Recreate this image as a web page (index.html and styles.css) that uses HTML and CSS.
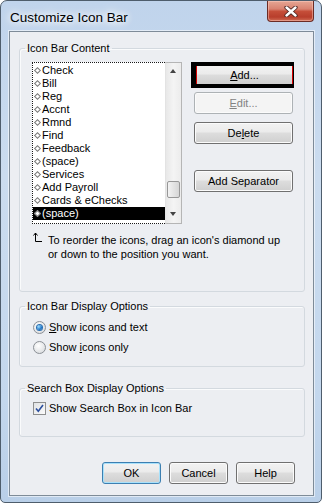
FILE: index.html
```html
<!DOCTYPE html>
<html lang="en">
<head>
    <meta charset="UTF-8">
    <title>Customize Icon Bar</title>
    <link rel="stylesheet" href="styles.css">
</head>
<body>
    <div class="window">
        <div class="titlebar">
            <span class="title">Customize Icon Bar</span>
            <button class="close-btn" aria-label="Close">
                <svg width="14" height="11" viewBox="0 0 14 11">
                    <path d="M2.5 1.5 L11.5 9.5 M11.5 1.5 L2.5 9.5" stroke="#4a2420" stroke-width="4.2" stroke-linecap="round" fill="none"/>
                    <path d="M2.5 1.5 L11.5 9.5 M11.5 1.5 L2.5 9.5" stroke="#ffffff" stroke-width="2.4" stroke-linecap="round" fill="none"/>
                </svg>
            </button>
        </div>

        <div class="client">
            <fieldset class="group group-content">
                <legend>Icon Bar Content</legend>
                <div class="group-body">
                    <div class="content-row">
                        <div class="listbox">
                            <ul class="items" id="itemList"></ul>
                            <div class="scrollbar">
                                <span class="arrow arrow-up"></span>
                                <div class="track">
                                    <span class="thumb"></span>
                                </div>
                                <span class="arrow arrow-down"></span>
                            </div>
                        </div>
                        <div class="side-buttons">
                            <div class="default-frame">
                                <button class="btn btn-add"><u>A</u>dd...</button>
                            </div>
                            <button class="btn btn-side btn-edit" disabled><u>E</u>dit...</button>
                            <button class="btn btn-side btn-delete">De<u>l</u>ete</button>
                            <button class="btn btn-side btn-sep">Add Separator</button>
                        </div>
                    </div>
                    <div class="hint">
                        <svg class="hint-arrow" width="10" height="11" viewBox="0 0 10 11">
                            <path d="M2.5 1 V9.5 H9" stroke="#000" stroke-width="1" fill="none"/>
                            <path d="M0.5 3.5 L2.5 1 L4.5 3.5" stroke="#000" stroke-width="1" fill="none"/>
                        </svg>
                        <p>To reorder the icons, drag an icon's diamond up<br>or down to the position you want.</p>
                    </div>
                </div>
            </fieldset>

            <fieldset class="group group-display">
                <legend>Icon Bar Display Options</legend>
                <div class="group-body">
                    <label class="option">
                        <span class="radio checked"></span>
                        <span><u>S</u>how icons and text</span>
                    </label>
                    <label class="option">
                        <span class="radio"></span>
                        <span>Show <u>i</u>cons only</span>
                    </label>
                </div>
            </fieldset>

            <fieldset class="group group-search">
                <legend>Search Box Display Options</legend>
                <div class="group-body">
                    <label class="option">
                        <span class="checkbox">
                            <svg width="9" height="9" viewBox="0 0 9 9">
                                <path d="M1 4.5 L3.3 7.3 L8 1" stroke="#2c4f9e" stroke-width="1.6" fill="none"/>
                            </svg>
                        </span>
                        <span>Show Search Box in Icon Bar</span>
                    </label>
                </div>
            </fieldset>

            <div class="footer">
                <button class="btn btn-foot btn-ok">OK</button>
                <button class="btn btn-foot">Cancel</button>
                <button class="btn btn-foot">Help</button>
            </div>
        </div>
    </div>

    <script>
        const items = ['Check', 'Bill', 'Reg', 'Accnt', 'Rmnd', 'Find', 'Feedback',
            '(space)', 'Services', 'Add Payroll', 'Cards & eChecks', '(space)'];
        const list = document.getElementById('itemList');
        items.forEach((name, i) => {
            const li = document.createElement('li');
            li.textContent = name;
            if (i === items.length - 1) li.className = 'selected';
            list.appendChild(li);
        });
    </script>
</body>
</html>
```

FILE: styles.css
```css
body {
    margin: 0;
    font-family: "Liberation Sans", Arial, sans-serif;
    font-size: 11px;
    color: #000;
}
.window {
    width: 322px;
    height: 503px;
    box-sizing: border-box;
    border: 1px solid #4e5d6c;
    border-radius: 7px 7px 5px 5px;
    padding: 0 7px 6px 8px;
    background: linear-gradient(#c0d4ec, #cbdcef 35%, #c3d7ed 80%, #b9cfe8);
    display: flex;
    flex-direction: column;
}
.titlebar {
    height: 30px;
    display: flex;
    align-items: flex-start;
    justify-content: space-between;
}
.title {
    margin-top: 9px;
    margin-left: 1px;
    font-size: 13.5px;
    color: #000;
    text-shadow: 0 0 6px #fff, 0 0 10px #fff, 0 0 14px #fff;
}
.close-btn {
    width: 47px;
    height: 21px;
    padding: 0;
    border: 1px solid #6b2b24;
    border-top: none;
    border-radius: 0 0 4px 4px;
    background: linear-gradient(#e6a694, #d98270 40%, #c54e39 52%, #b83e2c 80%, #d06d55);
    box-shadow: inset 0 0 0 1px rgba(255, 210, 200, 0.45);
    display: flex;
    align-items: center;
    justify-content: center;
}
.client {
    flex: 1;
    border: 1px solid #7e8b98;
    box-shadow: 0 0 0 1px rgba(255, 255, 255, 0.55);
    background: #eceef2;
    padding: 9px 8px 0 9px;
    display: flex;
    flex-direction: column;
}
.group {
    margin: 0;
    border: 1px solid #d3d9df;
    border-radius: 3px;
    box-shadow: inset 1px 1px 0 #fafbfc;
    padding: 0;
    min-width: 0;
}
.group legend {
    padding: 0 2px;
    margin-left: 5px;
    line-height: 14px;
}
.group-content .group-body {
    padding: 7px 10px 30px 12px;
}
.content-row {
    display: flex;
    gap: 9px;
}
.listbox {
    width: 150px;
    height: 162px;
    background: #fff;
    display: flex;
}
.items {
    list-style: none;
    margin: 0;
    padding: 1px 0 0 0;
    width: 133px;
    box-sizing: border-box;
    border: 1px dotted #1a1a1a;
    border-right: none;
}
.items li {
    height: 13px;
    line-height: 13px;
    padding-left: 9px;
    position: relative;
    white-space: nowrap;
}
.items li::before {
    content: "";
    position: absolute;
    left: 2px;
    top: 4px;
    width: 3px;
    height: 3px;
    border: 1px solid #7a7a7a;
    background: #fff;
    transform: rotate(45deg);
}
.items li.selected {
    background: #000;
    color: #fff;
}
.scrollbar {
    width: 17px;
    box-sizing: border-box;
    border: 1px solid #b5b5b5;
    border-left-color: #e3e3e3;
    background: linear-gradient(90deg, #e8e8e8, #f4f4f4 50%, #ececec);
    display: flex;
    flex-direction: column;
}
.arrow {
    height: 17px;
    position: relative;
}
.arrow::after {
    content: "";
    position: absolute;
    left: 4px;
    border-left: 3.5px solid transparent;
    border-right: 3.5px solid transparent;
}
.arrow-up::after {
    top: 6px;
    border-bottom: 4px solid #444;
}
.arrow-down::after {
    top: 6px;
    border-top: 4px solid #444;
}
.track {
    flex: 1;
    display: flex;
    flex-direction: column;
    justify-content: flex-end;
}
.thumb {
    height: 15px;
    margin: 0 1px 8px 1px;
    border: 1px solid #979797;
    border-radius: 2px;
    background: linear-gradient(90deg, #f3f3f3, #e4e4e4 50%, #d6d6d6);
}
.side-buttons {
    width: 103px;
    display: flex;
    flex-direction: column;
    align-items: flex-end;
}
.btn {
    font-family: inherit;
    font-size: 11px;
    color: #000;
    border: 1px solid #707070;
    border-radius: 3px;
    background: linear-gradient(#f2f2f2, #ebebeb 45%, #dddddd 50%, #cfcfcf);
    box-shadow: inset 0 0 0 1px #fbfbfb;
    padding: 0;
}
.btn:disabled {
    color: #838383;
    border-color: #adb2b5;
    background: #f4f4f4;
}
.default-frame {
    width: 103px;
    height: 26px;
    box-sizing: border-box;
    border: 4px solid #000;
    border-left-width: 5px;
    border-right-width: 1px;
    background: #000;
    display: flex;
}
.btn-add {
    flex: 1;
    border: none;
    border-left: 1px solid #d40000;
    border-right: 1px solid #d40000;
    border-radius: 0;
    box-shadow: none;
}
.btn-side {
    width: 99px;
    height: 22px;
    margin-right: 1px;
}
.btn-edit {
    margin-top: 4px;
}
.btn-delete {
    margin-top: 8px;
}
.btn-sep {
    margin-top: 26px;
}
.hint {
    display: flex;
    margin-top: 8px;
    margin-left: 1px;
}
.hint-arrow {
    flex-shrink: 0;
}
.hint p {
    margin: 1px 0 0 5px;
    line-height: 14px;
}
.group-display {
    margin-top: 7px;
}
.group-display .group-body {
    padding: 4px 0 9px 13px;
}
.group-search {
    margin-top: 14px;
}
.group-search .group-body {
    padding: 3px 0 18px 13px;
}
.option {
    height: 20px;
    display: flex;
    align-items: center;
    gap: 3px;
}
.radio {
    width: 13px;
    height: 13px;
    box-sizing: border-box;
    border-radius: 50%;
    border: 1px solid #8b9096;
    background: radial-gradient(circle at 40% 35%, #ffffff, #e0e2e4 70%, #c9ccd0);
    display: flex;
    align-items: center;
    justify-content: center;
}
.radio.checked::after {
    content: "";
    width: 5px;
    height: 5px;
    border-radius: 50%;
    background: radial-gradient(circle at 35% 35%, #9fe0ff, #1f77c9 60%, #0e4f95);
    box-shadow: 0 0 0 1px #2a6fb2;
}
.checkbox {
    width: 13px;
    height: 13px;
    box-sizing: border-box;
    border: 1px solid #8e8f8f;
    background: linear-gradient(135deg, #e0e2e4, #fbfbfb);
    display: flex;
    align-items: center;
    justify-content: center;
}
.footer {
    display: flex;
    justify-content: flex-end;
    gap: 8px;
    margin-top: 25px;
    padding-right: 10px;
}
.btn-foot {
    width: 59px;
    height: 22px;
}
.btn-ok {
    border-color: #3c7fb1;
    box-shadow: inset 0 0 0 1px #a8e1fb;
}
```
